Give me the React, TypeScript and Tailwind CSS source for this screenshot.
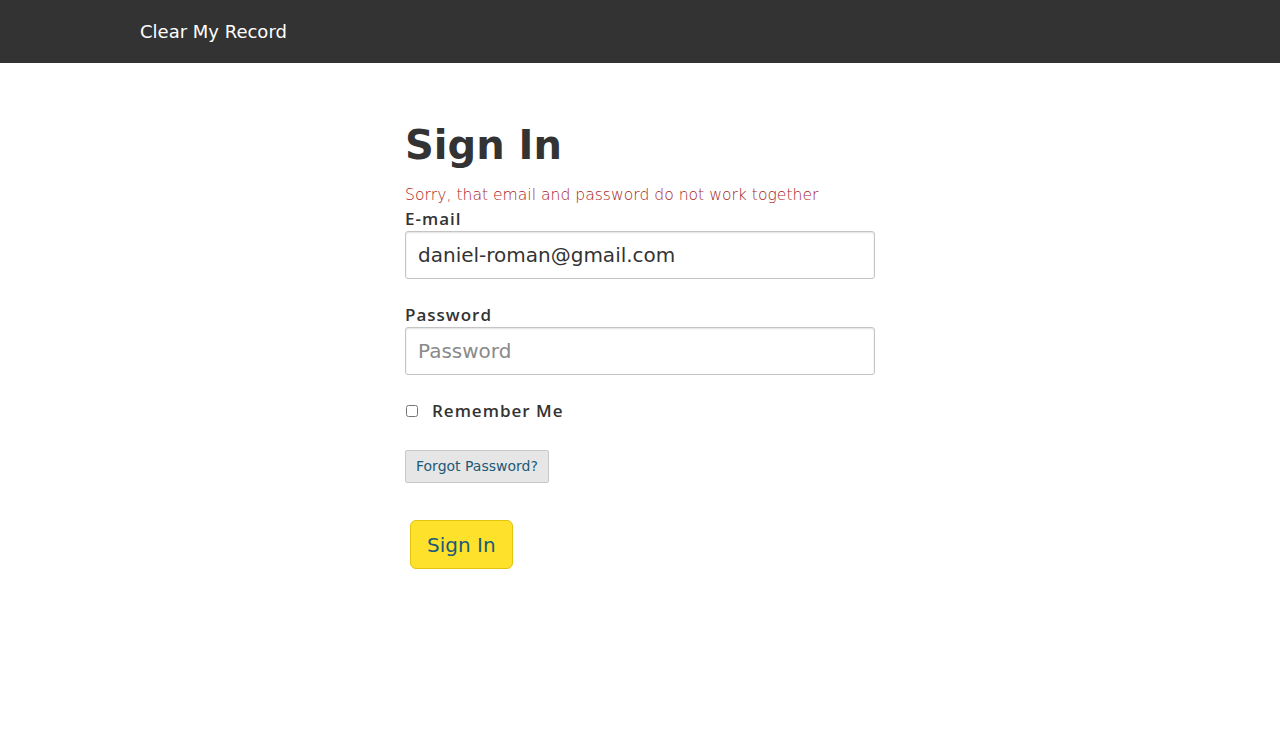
export default function App() {
  return (
    <div className="min-h-screen bg-white font-['DejaVu_Sans',sans-serif] text-[#333]">
      <nav className="h-[63px] bg-[#333] flex items-center">
        <span className="ml-[140px] text-[18px] text-white">Clear My Record</span>
      </nav>
      <main className="w-[470px] pt-[52px] ml-[405px]">
        <h1 className="text-[40px] font-bold leading-[60px] text-[#333]">Sign In</h1>
        <form className="flex flex-col">
          <p className="mt-[10px] text-[15.6px] leading-[20px] font-extralight text-[#a81c1c]">
            Sorry, that email and password do not work together
          </p>
          <label className="mt-[3px] mb-[1px] text-[17px] leading-[22px] font-semibold tracking-[1px] font-['Open_Sans',sans-serif]">
            E-mail
          </label>
          <input
            className="h-[48px] border border-[#c4c4c4] rounded-[3px] px-[12px] text-[20px] text-[#333] shadow-[inset_0_1px_2px_rgba(0,0,0,0.12)]"
            defaultValue="daniel-roman@gmail.com"
          />
          <label className="mt-[25px] mb-[1px] text-[17px] leading-[22px] font-semibold tracking-[1px] font-['Open_Sans',sans-serif]">
            Password
          </label>
          <input
            type="password"
            placeholder="Password"
            className="h-[48px] border border-[#c4c4c4] rounded-[3px] px-[12px] text-[20px] placeholder:text-[#8a8a8a] shadow-[inset_0_1px_2px_rgba(0,0,0,0.12)]"
          />
          <div className="mt-[26px] flex items-center h-[20px]">
            <input type="checkbox" className="ml-[1px] w-[12px] h-[12px]" />
            <span className="ml-[14px] text-[17px] font-semibold tracking-[1px] font-['Open_Sans',sans-serif]">
              Remember Me
            </span>
          </div>
          <div className="mt-[29px]">
            <button type="button" className="h-[33px] px-[10px] bg-[#e6e6e6] border border-[#c8c8c8] rounded-[2px] text-[14px] text-[#1b5a78]">
              Forgot Password?
            </button>
          </div>
          <div className="mt-[37px] ml-[5px]">
            <button type="button" className="h-[49px] px-[16px] bg-[#fde12a] border border-[#e2c40d] rounded-[6px] text-[20px] text-[#1b5a78]">
              Sign In
            </button>
          </div>
        </form>
      </main>
    </div>
  );
}
